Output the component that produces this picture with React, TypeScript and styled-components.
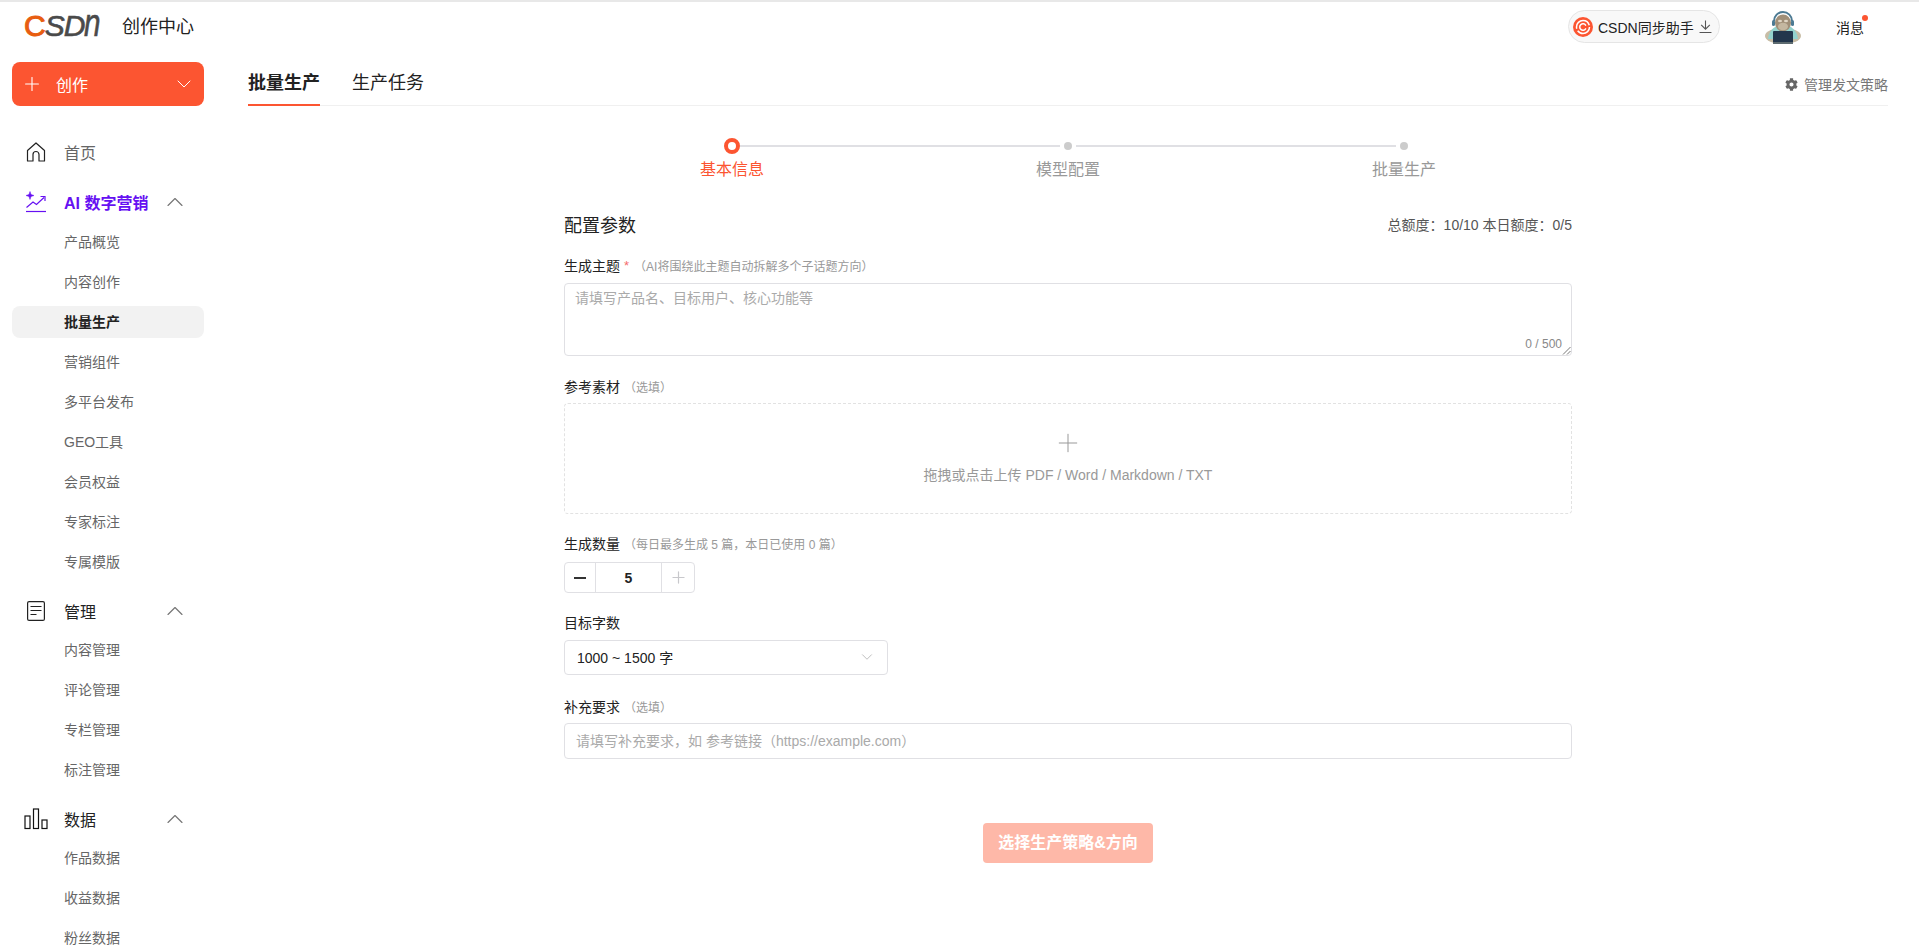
import React from 'react';
import styled, { createGlobalStyle } from 'styled-components';
import { Plus, ChevronDown, ChevronUp } from 'lucide-react';
import { FaCog } from 'react-icons/fa';

const GlobalStyle = createGlobalStyle`
  html, body {
    margin: 0;
    height: 100%;
    overflow: hidden;
    background: #fff;
    font-family: "Liberation Sans", "Noto Sans CJK SC", sans-serif;
    color: #222;
  }
  * { box-sizing: border-box; }
`;

const brand = '#fc5531';

const Page = styled.div`
  height: 946px;
  overflow: hidden;
  border-top: 2px solid #e8e8e8;
`;

const TopBar = styled.header`
  height: 60px;
  display: flex;
  align-items: center;
  padding: 0 55px 14px 24px;
`;

const Logo = styled.div`
  width: 98px;
  height: 34px;
  font-size: 30px;
  font-weight: 400;
  line-height: 34px;
  letter-spacing: -1px;
  color: #4a4a4a;
  font-style: italic;
  white-space: nowrap;
  -webkit-text-stroke: 0.6px currentColor;
`;

const LogoC = styled.span`
  color: #e85d10;
  font-style: normal;
  -webkit-text-stroke: 1px currentColor;
`;

const LogoTail = styled.span`
  display: inline-block;
  font-size: 38px;
  line-height: 30px;
  transform: scaleX(0.78);
  transform-origin: left;
`;

const CenterTitle = styled.div`
  font-size: 18px;
  color: #222;
`;

const TopRight = styled.div`
  margin-left: auto;
  margin-top: 3px;
  display: flex;
  align-items: center;
`;

const SyncPill = styled.div`
  width: 152px;
  height: 33px;
  display: flex;
  align-items: center;
  gap: 5px;
  padding: 0 4px;
  border: 1px solid #e5e5e5;
  border-radius: 17px;
  background: #f8f8f8;
  font-size: 14px;
  color: #222;
`;

const Message = styled.div`
  position: relative;
  margin-left: 34px;
  font-size: 14px;
  color: #222;
  &::after {
    content: '';
    position: absolute;
    top: -2px;
    right: -4px;
    width: 6px;
    height: 6px;
    border-radius: 50%;
    background: ${brand};
  }
`;

const Body = styled.div`
  display: flex;
  align-items: flex-start;
`;

const Sidebar = styled.aside`
  width: 192px;
  margin-left: 12px;
  flex: none;
`;

const CreateButton = styled.div`
  height: 44px;
  display: flex;
  align-items: center;
  padding: 0 8px 0 9px;
  border-radius: 8px;
  background: ${brand};
  color: #fff;
  font-size: 16px;
  span {
    margin-left: 13px;
  }
  svg:last-child {
    margin-left: auto;
  }
`;

const NavHead = styled.div<{ $color?: string; $bold?: boolean; $top?: number }>`
  height: 40px;
  margin-top: ${(p) => p.$top ?? 13}px;
  padding-bottom: 1px;
  display: flex;
  align-items: center;
  font-size: 16px;
  font-weight: ${(p) => (p.$bold ? 700 : 400)};
  color: ${(p) => p.$color || '#222'};
`;

const NavIcon = styled.span`
  width: 52px;
  padding-right: 4px;
  display: flex;
  align-items: center;
  justify-content: center;
`;

const NavChevron = styled(ChevronUp)`
  margin-left: auto;
  margin-right: 15px;
  color: #777;
`;

const SubList = styled.div<{ $top: number }>`
  margin-top: ${(p) => p.$top}px;
  display: flex;
  flex-direction: column;
  gap: 8px;
`;

const SubItem = styled.div<{ $active?: boolean }>`
  height: 32px;
  line-height: 32px;
  padding-left: 52px;
  border-radius: 8px;
  font-size: 14px;
  font-weight: ${(p) => (p.$active ? 700 : 400)};
  color: ${(p) => (p.$active ? '#222' : '#666')};
  background: ${(p) => (p.$active ? '#f2f2f2' : 'transparent')};
`;

const Main = styled.main`
  width: 1640px;
  margin-left: 44px;
  flex: none;
`;

const Tabs = styled.nav`
  height: 44px;
  display: flex;
  align-items: flex-start;
  gap: 32px;
  border-bottom: 1px solid #f0f0f0;
`;

const Tab = styled.div<{ $active?: boolean }>`
  height: 44px;
  line-height: 42px;
  font-size: 18px;
  font-weight: ${(p) => (p.$active ? 700 : 400)};
  color: #222;
  border-bottom: 2px solid ${(p) => (p.$active ? brand : 'transparent')};
`;

const TabAction = styled.div`
  margin-left: auto;
  height: 44px;
  display: flex;
  align-items: center;
  gap: 6px;
  font-size: 14px;
  color: #777;
`;

const Form = styled.div`
  width: 1008px;
  margin: 0 auto;
`;

const Steps = styled.div`
  display: grid;
  grid-template-columns: repeat(3, 1fr);
  margin-top: 32px;
`;

const Step = styled.div<{ $active?: boolean; $line?: boolean }>`
  position: relative;
  display: flex;
  flex-direction: column;
  align-items: center;
  font-size: 16px;
  color: ${(p) => (p.$active ? brand : '#999')};
  &::after {
    content: '';
    display: ${(p) => (p.$line ? 'block' : 'none')};
    position: absolute;
    top: 7px;
    left: calc(50% + 8px);
    width: 320px;
    height: 2px;
    background: #e0e0e4;
  }
`;

const StepDotRow = styled.div`
  height: 16px;
  display: flex;
  align-items: center;
  margin-bottom: 4px;
`;

const StepDot = styled.div<{ $active?: boolean }>`
  width: ${(p) => (p.$active ? '16px' : '8px')};
  height: ${(p) => (p.$active ? '16px' : '8px')};
  border-radius: 50%;
  background: ${(p) => (p.$active ? '#fff' : '#ccc')};
  border: ${(p) => (p.$active ? `4px solid ${brand}` : 'none')};
`;

const StepLabel = styled.div`
  line-height: 24px;
`;

const FormHead = styled.div`
  margin-top: 30px;
  padding-bottom: 2px;
  display: flex;
  align-items: center;
  justify-content: space-between;
  height: 26px;
`;

const FormTitle = styled.div`
  font-size: 18px;
  color: #222;
`;

const Quota = styled.div`
  font-size: 14px;
  color: #555;
`;

const Label = styled.div<{ $top: number }>`
  margin-top: ${(p) => p.$top}px;
  height: 20px;
  line-height: 20px;
  font-size: 14px;
  color: #222;
  display: flex;
  align-items: center;
`;

const Required = styled.span`
  margin: 0 1px 0 4px;
  color: #f56c6c;
  font-size: 13px;
`;

const Hint = styled.span`
  margin-left: 4px;
  padding-top: 2px;
  font-size: 12px;
  color: #999;
`;

const TextBox = styled.div`
  position: relative;
  margin-top: 7px;
  height: 73px;
  padding: 5px 10px;
  border: 1px solid #e0e0e4;
  border-radius: 4px;
  font-size: 14px;
  line-height: 18px;
  color: #aaa;
`;

const Counter = styled.span`
  position: absolute;
  right: 9px;
  bottom: 4px;
  font-size: 12px;
  line-height: 14px;
  color: #888;
`;

const Grip = styled.svg`
  position: absolute;
  right: 0;
  bottom: 0;
`;

const DropZone = styled.div`
  margin-top: 6px;
  height: 111px;
  padding-bottom: 6px;
  display: flex;
  flex-direction: column;
  align-items: center;
  justify-content: center;
  gap: 9px;
  border: 1px dashed #e2e2e2;
  border-radius: 4px;
  font-size: 14px;
  line-height: 16px;
  color: #999;
`;

const Stepper = styled.div`
  margin-top: 8px;
  width: 131px;
  height: 31px;
  display: grid;
  grid-template-columns: 30px 1fr 32px;
  border: 1px solid #e0e0e4;
  border-radius: 4px;
`;

const StepperCell = styled.div<{ $mid?: boolean; $muted?: boolean }>`
  display: flex;
  align-items: center;
  justify-content: center;
  font-size: 14px;
  font-weight: 700;
  color: ${(p) => (p.$muted ? '#c8c8cc' : '#222')};
  border-left: ${(p) => (p.$mid ? '1px solid #e0e0e4' : 'none')};
  border-right: ${(p) => (p.$mid ? '1px solid #e0e0e4' : 'none')};
`;

const SelectBox = styled.div`
  margin-top: 7px;
  width: 324px;
  height: 35px;
  display: flex;
  align-items: center;
  justify-content: space-between;
  padding: 0 11px 1px 12px;
  border: 1px solid #e0e0e4;
  border-radius: 4px;
  font-size: 14px;
  color: #222;
`;

const InputBox = styled.div`
  margin-top: 6px;
  height: 36px;
  line-height: 34px;
  padding: 0 11px;
  border: 1px solid #e0e0e4;
  border-radius: 4px;
  font-size: 14px;
  color: #aaa;
`;

const SubmitRow = styled.div`
  margin-top: 64px;
  display: flex;
  justify-content: center;
`;

const SubmitButton = styled.div`
  width: 170px;
  height: 40px;
  line-height: 40px;
  text-align: center;
  border-radius: 4px;
  background: #feb8a8;
  color: #fff;
  font-size: 16px;
  font-weight: 700;
`;

const HomeIcon = () => (
  <svg width="20" height="20" viewBox="0 0 20 20" fill="none" stroke="#222" strokeWidth="1.2">
    <path d="M1.5 8.5 10 1l8.500 7.500V19H13v-6.500a3 3 0 0 0-6 0V19H1.500Z" strokeLinejoin="round" />
  </svg>
);

const TrendIcon = () => (
  <svg width="22" height="22" viewBox="0 0 22 22" fill="none" stroke="#6610f2">
    <path d="M1 20.500h20" strokeWidth="1.2" />
    <path d="M1.500 16.500 8 11l3.500 2.500L19 6.500" strokeWidth="1.2" />
    <path d="M15.500 5.500H20V10" strokeWidth="1.2" />
    <path d="M5 0.500 6 3.500 9 4.500 6 5.500 5 8.500 4 5.500 1 4.500 4 3.500Z" fill="#6610f2" strokeWidth="0.5" />
  </svg>
);

const DocIcon = () => (
  <svg width="18" height="20" viewBox="0 0 18 20" fill="none" stroke="#222" strokeWidth="1.2">
    <rect x="0.600" y="0.600" width="16.800" height="18.800" rx="1.500" />
    <path d="M3.500 5.500h11M3.500 9.500h11M3.500 13.500h6" />
  </svg>
);

const BarsIcon = () => (
  <svg width="24" height="22" viewBox="0 0 24 22" fill="none" stroke="#111" strokeWidth="1.2">
    <rect x="1" y="8" width="5" height="12.500" />
    <rect x="9.500" y="1" width="5" height="19.500" />
    <rect x="18" y="12" width="5" height="8.500" />
  </svg>
);

const CsdnBadge = () => (
  <svg width="20" height="20" viewBox="0 0 20 20" fill="none">
    <circle cx="10" cy="10" r="10" fill={brand} />
    <circle cx="10" cy="10" r="6.500" stroke="#fff" strokeWidth="1.500" strokeDasharray="16 2 20 3" />
    <path d="M12.600 8.200a3.200 3.200 0 1 0 0 3.600" stroke="#fff" strokeWidth="1.500" strokeLinecap="round" />
  </svg>
);

const DownloadIcon = () => (
  <svg width="13" height="13" viewBox="0 0 12 12" fill="none" stroke="#555" strokeWidth="1">
    <path d="M6 0.500v7.500M2 4.500 6 8.500l4-4M0.500 11.500h11" />
  </svg>
);

const Avatar = () => (
  <svg width="38" height="36" viewBox="0 0 38 36" style={{ marginLeft: 44 }}>
    <ellipse cx="19" cy="27" rx="18" ry="8" fill="#c8bda6" />
    <path d="M4 30c1-9 7-14 15-14s14 5 15 14Z" fill="#93d2cd" />
    <path d="M10 12a9 9 0 0 1 18 0" fill="none" stroke="#4c7a93" strokeWidth="2" />
    <rect x="8" y="11" width="3" height="6" rx="1.500" fill="#4c7a93" />
    <rect x="27" y="11" width="3" height="6" rx="1.500" fill="#4c7a93" />
    <ellipse cx="19" cy="14" rx="8" ry="8.500" fill="#a08f78" />
    <ellipse cx="19" cy="17.500" rx="5" ry="3.800" fill="#c4b7a0" />
    <ellipse cx="16" cy="12" rx="2" ry="1.300" fill="#e0d6c4" />
    <ellipse cx="22" cy="12" rx="2" ry="1.300" fill="#e0d6c4" />
    <rect x="9" y="22" width="20" height="12" rx="1" fill="#22364c" />
    <rect x="9" y="33" width="20" height="2" fill="#5d6b70" />
  </svg>
);

const subGroups = {
  ai: ['产品概览', '内容创作', '批量生产', '营销组件', '多平台发布', 'GEO工具', '会员权益', '专家标注', '专属模版'],
  manage: ['内容管理', '评论管理', '专栏管理', '标注管理'],
  data: ['作品数据', '收益数据', '粉丝数据'],
};

const SubMenu = ({ items, top }: { items: string[]; top: number }) => (
  <SubList $top={top}>
    {items.map((name) => (
      <SubItem key={name} $active={name === '批量生产'}>
        {name}
      </SubItem>
    ))}
  </SubList>
);

export default function App() {
  return (
    <>
      <GlobalStyle />
      <Page>
        <TopBar>
          <Logo>
            <LogoC>C</LogoC>SD<LogoTail>n</LogoTail>
          </Logo>
          <CenterTitle>创作中心</CenterTitle>
          <TopRight>
            <SyncPill>
              <CsdnBadge />
              CSDN同步助手
              <DownloadIcon />
            </SyncPill>
            <Avatar />
            <Message>消息</Message>
          </TopRight>
        </TopBar>
        <Body>
          <Sidebar>
            <CreateButton>
              <Plus size={22} strokeWidth={1.200} />
              <span>创作</span>
              <ChevronDown size={24} strokeWidth={1} />
            </CreateButton>
            <NavHead $color="#666" $top={26}>
              <NavIcon>
                <HomeIcon />
              </NavIcon>
              首页
            </NavHead>
            <NavHead $bold $color="#6610f2" $top={10}>
              <NavIcon>
                <TrendIcon />
              </NavIcon>
              AI 数字营销
              <NavChevron size={28} strokeWidth={1} />
            </NavHead>
            <SubMenu items={subGroups.ai} top={4} />
            <NavHead>
              <NavIcon>
                <DocIcon />
              </NavIcon>
              管理
              <NavChevron size={28} strokeWidth={1} />
            </NavHead>
            <SubMenu items={subGroups.manage} top={3} />
            <NavHead>
              <NavIcon>
                <BarsIcon />
              </NavIcon>
              数据
              <NavChevron size={28} strokeWidth={1} />
            </NavHead>
            <SubMenu items={subGroups.data} top={3} />
          </Sidebar>
          <Main>
            <Tabs>
              <Tab $active>批量生产</Tab>
              <Tab>生产任务</Tab>
              <TabAction>
                <FaCog size={13} color="#666" />
                管理发文策略
              </TabAction>
            </Tabs>
            <Form>
              <Steps>
                <Step $active $line>
                  <StepDotRow>
                    <StepDot $active />
                  </StepDotRow>
                  <StepLabel>基本信息</StepLabel>
                </Step>
                <Step $line>
                  <StepDotRow>
                    <StepDot />
                  </StepDotRow>
                  <StepLabel>模型配置</StepLabel>
                </Step>
                <Step>
                  <StepDotRow>
                    <StepDot />
                  </StepDotRow>
                  <StepLabel>批量生产</StepLabel>
                </Step>
              </Steps>
              <FormHead>
                <FormTitle>配置参数</FormTitle>
                <Quota>总额度：10/10 本日额度：0/5</Quota>
              </FormHead>
              <Label $top={18}>
                生成主题<Required>*</Required>
                <Hint>（AI将围绕此主题自动拆解多个子话题方向）</Hint>
              </Label>
              <TextBox>
                请填写产品名、目标用户、核心功能等
                <Counter>0 / 500</Counter>
                <Grip width="10" height="10" viewBox="0 0 10 10" stroke="#555" strokeWidth="0.800">
                  <path d="M2 9.500 9.500 2M6 9.500 9.500 6" />
                </Grip>
              </TextBox>
              <Label $top={21}>
                参考素材<Hint>（选填）</Hint>
              </Label>
              <DropZone>
                <Plus size={30} strokeWidth={0.800} color="#999" />
                拖拽或点击上传 PDF / Word / Markdown / TXT
              </DropZone>
              <Label $top={20}>
                生成数量<Hint>（每日最多生成 5 篇，本日已使用 0 篇）</Hint>
              </Label>
              <Stepper>
                <StepperCell>
                  <svg width="12" height="2" viewBox="0 0 12 2">
                    <rect width="12" height="2" fill="#333" />
                  </svg>
                </StepperCell>
                <StepperCell $mid>5</StepperCell>
                <StepperCell $muted>
                  <Plus size={19} strokeWidth={1.500} />
                </StepperCell>
              </Stepper>
              <Label $top={20}>目标字数</Label>
              <SelectBox>
                1000 ~ 1500 字
                <ChevronDown size={18} strokeWidth={1} color="#aaa" />
              </SelectBox>
              <Label $top={22}>
                补充要求<Hint>（选填）</Hint>
              </Label>
              <InputBox>请填写补充要求，如 参考链接（https://example.com）</InputBox>
              <SubmitRow>
                <SubmitButton>选择生产策略&amp;方向</SubmitButton>
              </SubmitRow>
            </Form>
          </Main>
        </Body>
      </Page>
    </>
  );
}
